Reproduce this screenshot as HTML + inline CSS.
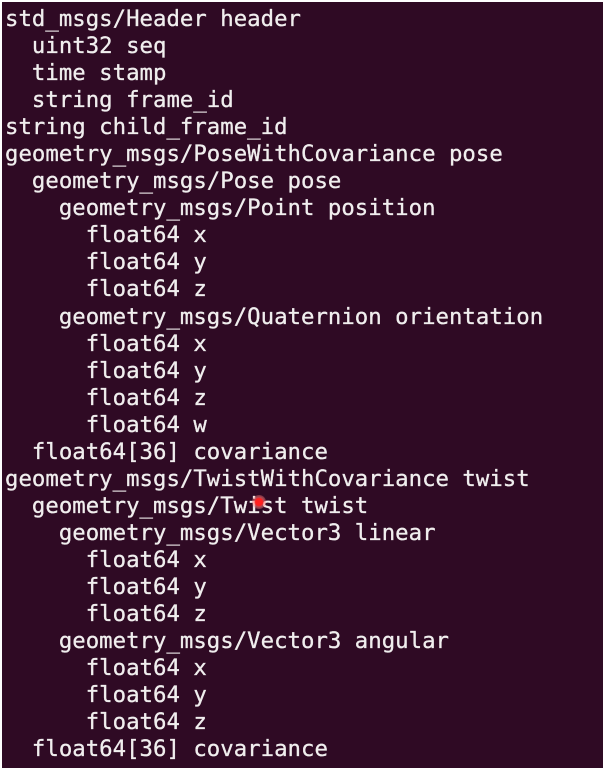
<!DOCTYPE html>
<html><head><style>
html,body{margin:0;padding:0;background:#fff;}
.t{position:absolute;left:2px;top:2px;width:601px;height:766px;background:#2f0a24;overflow:hidden;}
pre{margin:0;position:absolute;left:3px;top:4px;font-family:"DejaVu Sans Mono","Liberation Mono",monospace;font-size:22.3px;line-height:27.05px;color:#f0eeee;letter-spacing:0.03px;-webkit-text-stroke:0.3px #f0eeee;}
.dot{position:absolute;left:250px;top:493px;width:14px;height:14px;border-radius:50%;background:radial-gradient(circle,#ff2020 0 35%,rgba(255,120,120,.6) 50%,rgba(255,150,150,0) 100%);}
</style></head><body><div class="t"><pre>std_msgs/Header header
  uint32 seq
  time stamp
  string frame_id
string child_frame_id
geometry_msgs/PoseWithCovariance pose
  geometry_msgs/Pose pose
    geometry_msgs/Point position
      float64 x
      float64 y
      float64 z
    geometry_msgs/Quaternion orientation
      float64 x
      float64 y
      float64 z
      float64 w
  float64[36] covariance
geometry_msgs/TwistWithCovariance twist
  geometry_msgs/Twist twist
    geometry_msgs/Vector3 linear
      float64 x
      float64 y
      float64 z
    geometry_msgs/Vector3 angular
      float64 x
      float64 y
      float64 z
  float64[36] covariance</pre><div class="dot"></div></div></body></html>
